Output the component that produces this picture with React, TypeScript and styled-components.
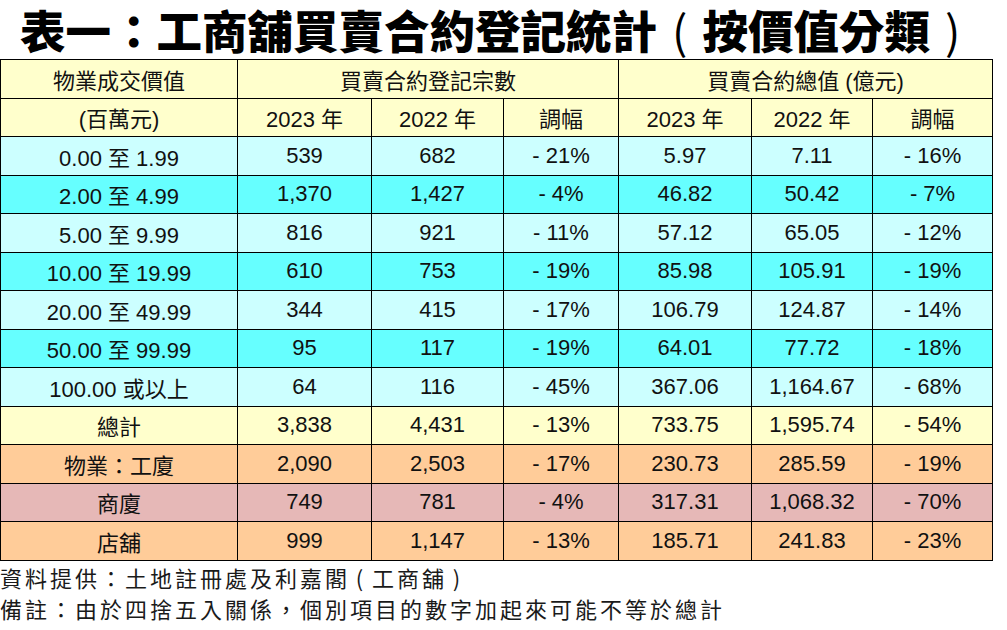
import React from "react";
import styled, { createGlobalStyle } from "styled-components";

const Global = createGlobalStyle`
  html, body { margin: 0; padding: 0; background: #fff; }
  body { font-family: "Liberation Sans", "Noto Sans CJK TC", sans-serif; }
`;

const Page = styled.div`
  width: 1007px;
  height: 630px;
  overflow: hidden;
  background: #fff;
`;

const Title = styled.h1`
  margin: 0;
  padding-left: 20px;
  height: 59px;
  line-height: 58px;
  font-family: "Noto Sans CJK TC", sans-serif;
  font-weight: 900;
  font-size: 45.5px;
  color: #000;
  white-space: nowrap;
`;

const Paren = styled.span`
  display: inline-block;
  width: 1em;
  text-align: center;
  font-weight: 400;
`;

const Table = styled.table`
  width: 992px;
  border-collapse: collapse;
  table-layout: fixed;
`;

type Tone = "head" | "light" | "cyan" | "orange" | "pink";
const toneColor: Record<Tone, string> = {
  head: "#ffffcc",
  light: "#ccffff",
  cyan: "#66ffff",
  orange: "#ffcc99",
  pink: "#e6b8b7",
};

const Row = styled.tr<{ $tone: Tone }>`
  height: 38.5px;
  background: ${(p) => toneColor[p.$tone]};
`;

const Cell = styled.td`
  border: 1.5px solid #000;
  padding: 0;
  text-align: center;
  vertical-align: middle;
  font-size: 22px;
  color: #111;
  font-family: "Liberation Sans", "Noto Sans CJK TC", sans-serif;
  white-space: nowrap;
`;

const Notes = styled.div`
  padding-top: 1px;
  font-family: "Noto Sans CJK TC", sans-serif;
  font-size: 22px;
  letter-spacing: 3px;
  line-height: 31px;
  color: #1a1a1a;
`;

const widths = [237, 134, 132, 115, 133, 121, 120];

type DataRow = { tone: Tone; cells: string[] };

const rows: DataRow[] = [
  { tone: "light", cells: ["0.00 至 1.99", "539", "682", "- 21%", "5.97", "7.11", "- 16%"] },
  { tone: "cyan", cells: ["2.00 至 4.99", "1,370", "1,427", "- 4%", "46.82", "50.42", "- 7%"] },
  { tone: "light", cells: ["5.00 至 9.99", "816", "921", "- 11%", "57.12", "65.05", "- 12%"] },
  { tone: "cyan", cells: ["10.00 至 19.99", "610", "753", "- 19%", "85.98", "105.91", "- 19%"] },
  { tone: "light", cells: ["20.00 至 49.99", "344", "415", "- 17%", "106.79", "124.87", "- 14%"] },
  { tone: "cyan", cells: ["50.00 至 99.99", "95", "117", "- 19%", "64.01", "77.72", "- 18%"] },
  { tone: "light", cells: ["100.00 或以上", "64", "116", "- 45%", "367.06", "1,164.67", "- 68%"] },
  { tone: "head", cells: ["總計", "3,838", "4,431", "- 13%", "733.75", "1,595.74", "- 54%"] },
  { tone: "orange", cells: ["物業：工廈", "2,090", "2,503", "- 17%", "230.73", "285.59", "- 19%"] },
  { tone: "pink", cells: ["商廈", "749", "781", "- 4%", "317.31", "1,068.32", "- 70%"] },
  { tone: "orange", cells: ["店舖", "999", "1,147", "- 13%", "185.71", "241.83", "- 23%"] },
];

export default function App() {
  return (
    <Page>
      <Global />
      <Title>
        表一：工商舖買賣合約登記統計<Paren>(</Paren>按價值分類<Paren>)</Paren>
      </Title>
      <Table>
        <colgroup>
          {widths.map((w, i) => (
            <col key={i} style={{ width: w }} />
          ))}
        </colgroup>
        <tbody>
          <Row $tone="head">
            <Cell>物業成交價值</Cell>
            <Cell colSpan={3}>買賣合約登記宗數</Cell>
            <Cell colSpan={3}>買賣合約總值 (億元)</Cell>
          </Row>
          <Row $tone="head">
            <Cell>(百萬元)</Cell>
            <Cell>2023 年</Cell>
            <Cell>2022 年</Cell>
            <Cell>調幅</Cell>
            <Cell>2023 年</Cell>
            <Cell>2022 年</Cell>
            <Cell>調幅</Cell>
          </Row>
          {rows.map((r, i) => (
            <Row key={i} $tone={r.tone}>
              {r.cells.map((c, j) => (
                <Cell key={j}>{c}</Cell>
              ))}
            </Row>
          ))}
        </tbody>
      </Table>
      <Notes>
        <div>
          資料提供：土地註冊處及利嘉閣<Paren>(</Paren>工商舖<Paren>)</Paren>
        </div>
        <div>備註：由於四捨五入關係，個別項目的數字加起來可能不等於總計</div>
      </Notes>
    </Page>
  );
}
